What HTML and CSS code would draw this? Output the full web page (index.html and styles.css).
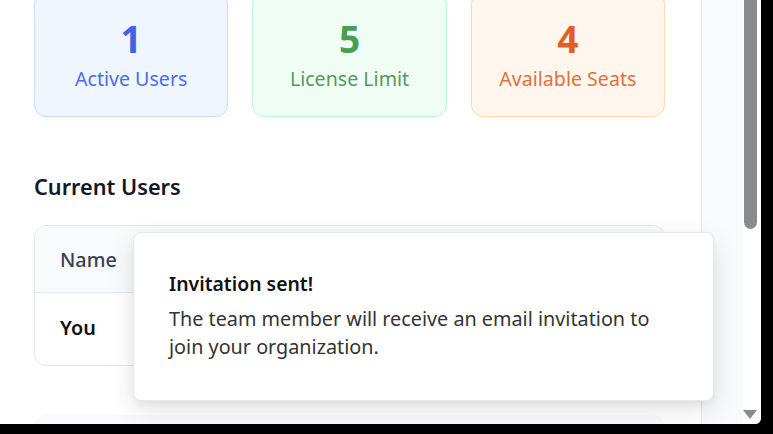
FILE: index.html
```html
<!DOCTYPE html>
<html lang="en">
<head>
<meta charset="utf-8">
<title>Team</title>
<link rel="stylesheet" href="styles.css">
</head>
<body>
<div class="window">
  <div class="panel">
    <div class="stats">
      <div class="stat stat-blue">
        <div class="stat-num">1</div>
        <div class="stat-label">Active Users</div>
      </div>
      <div class="stat stat-green">
        <div class="stat-num">5</div>
        <div class="stat-label">License Limit</div>
      </div>
      <div class="stat stat-orange">
        <div class="stat-num">4</div>
        <div class="stat-label">Available Seats</div>
      </div>
    </div>
    <h2 class="section-title">Current Users</h2>
    <div class="table">
      <div class="table-head">Name</div>
      <div class="table-row">You</div>
    </div>
    <div class="next-box"></div>
  </div>
  <div class="aside"></div>
  <div class="scrollbar">
    <div class="thumb"></div>
    <div class="track"></div>
    <div class="arrow"></div>
  </div>
  <div class="toast">
    <div class="toast-title">Invitation sent!</div>
    <div class="toast-body">The team member will receive an email invitation to join your organization.</div>
  </div>
</div>
</body>
</html>
```
FILE: styles.css
```css
* { box-sizing: border-box; }
html, body { margin: 0; padding: 0; }
body {
  background: #000;
  width: 773px;
  height: 434px;
  overflow: hidden;
  font-family: "Noto Sans", "Open Sans", sans-serif;
}
.window {
  position: relative;
  width: 761px;
  height: 424px;
  background: #f9fafb;
  border-bottom-right-radius: 6px;
  overflow: hidden;
  display: flex;
}
.panel {
  width: 702px;
  flex: none;
  background: #fff;
  border-right: 1px solid #e5e7eb;
  padding: 0 36px 0 34px;
  margin-top: -8px;
}
.stats {
  display: grid;
  grid-template-columns: repeat(3, 1fr);
  gap: 24px;
}
.stat {
  border: 1px solid;
  border-radius: 12px;
  text-align: center;
  padding: 24px 8px 22px;
}
.stat-num {
  font-size: 37px;
  font-weight: 700;
  line-height: 44px;
}
.stat-label {
  font-size: 19.6px;
  line-height: 30px;
  margin-top: 3px;
}
.stat-blue { background: #eff6ff; border-color: #c7dcfd; color: #3e63e4; }
.stat-blue .stat-label { color: #4a6de8; }
.stat-green { background: #f0fdf4; border-color: #bbf7d0; color: #46a050; }
.stat-green .stat-label { color: #56985a; }
.stat-orange { background: #fff7ed; border-color: #fcd9b0; color: #df5f27; }
.stat-orange .stat-label { color: #e2703d; }

.section-title {
  margin: 55px 0 23px;
  font-size: 21.7px;
  line-height: 30px;
  font-weight: 600;
  color: #111827;
}
.table {
  border: 1px solid #e5e7eb;
  border-radius: 12px;
  overflow: hidden;
}
.table-head {
  background: #f9fafb;
  border-bottom: 1px solid #e5e7eb;
  height: 67px;
  padding: 20px 25px 0;
  font-size: 19.8px;
  line-height: 28px;
  font-weight: 500;
  color: #374151;
}
.table-row {
  height: 72px;
  padding: 21px 25px 0;
  font-size: 19.8px;
  line-height: 28px;
  font-weight: 600;
  color: #111;
}
.next-box {
  margin-top: 49px;
  height: 40px;
  background: #f9fafb;
  border-radius: 12px;
}
.aside {
  flex: 1;
  background: #f9fafb;
}
.scrollbar {
  width: 19px;
  flex: none;
  background: #fff;
  position: relative;
  display: flex;
  flex-direction: column;
  align-items: center;
}
.thumb {
  width: 13px;
  height: 229px;
  background: #8b8b8b;
  border-radius: 0 0 7px 7px;
  margin-left: -2px;
}
.track { flex: 1; }
.arrow {
  width: 0;
  height: 0;
  border-left: 7px solid transparent;
  border-right: 7px solid transparent;
  border-top: 9px solid #8b8b8b;
  margin: 0 0 5px -3px;
}
.toast {
  position: absolute;
  left: 133px;
  top: 232px;
  width: 581px;
  height: 169px;
  background: #fff;
  border: 1px solid #e5e7eb;
  border-radius: 8px;
  box-shadow: 0 10px 28px rgba(0,0,0,0.10), 0 4px 10px rgba(0,0,0,0.05);
  padding: 37px 35px 0 35px;
}
.toast-title {
  font-size: 19.4px;
  font-weight: 600;
  color: #111;
  line-height: 28px;
}
.toast-body {
  margin-top: 7px;
  font-size: 19.8px;
  line-height: 28px;
  color: #333;
}
```
